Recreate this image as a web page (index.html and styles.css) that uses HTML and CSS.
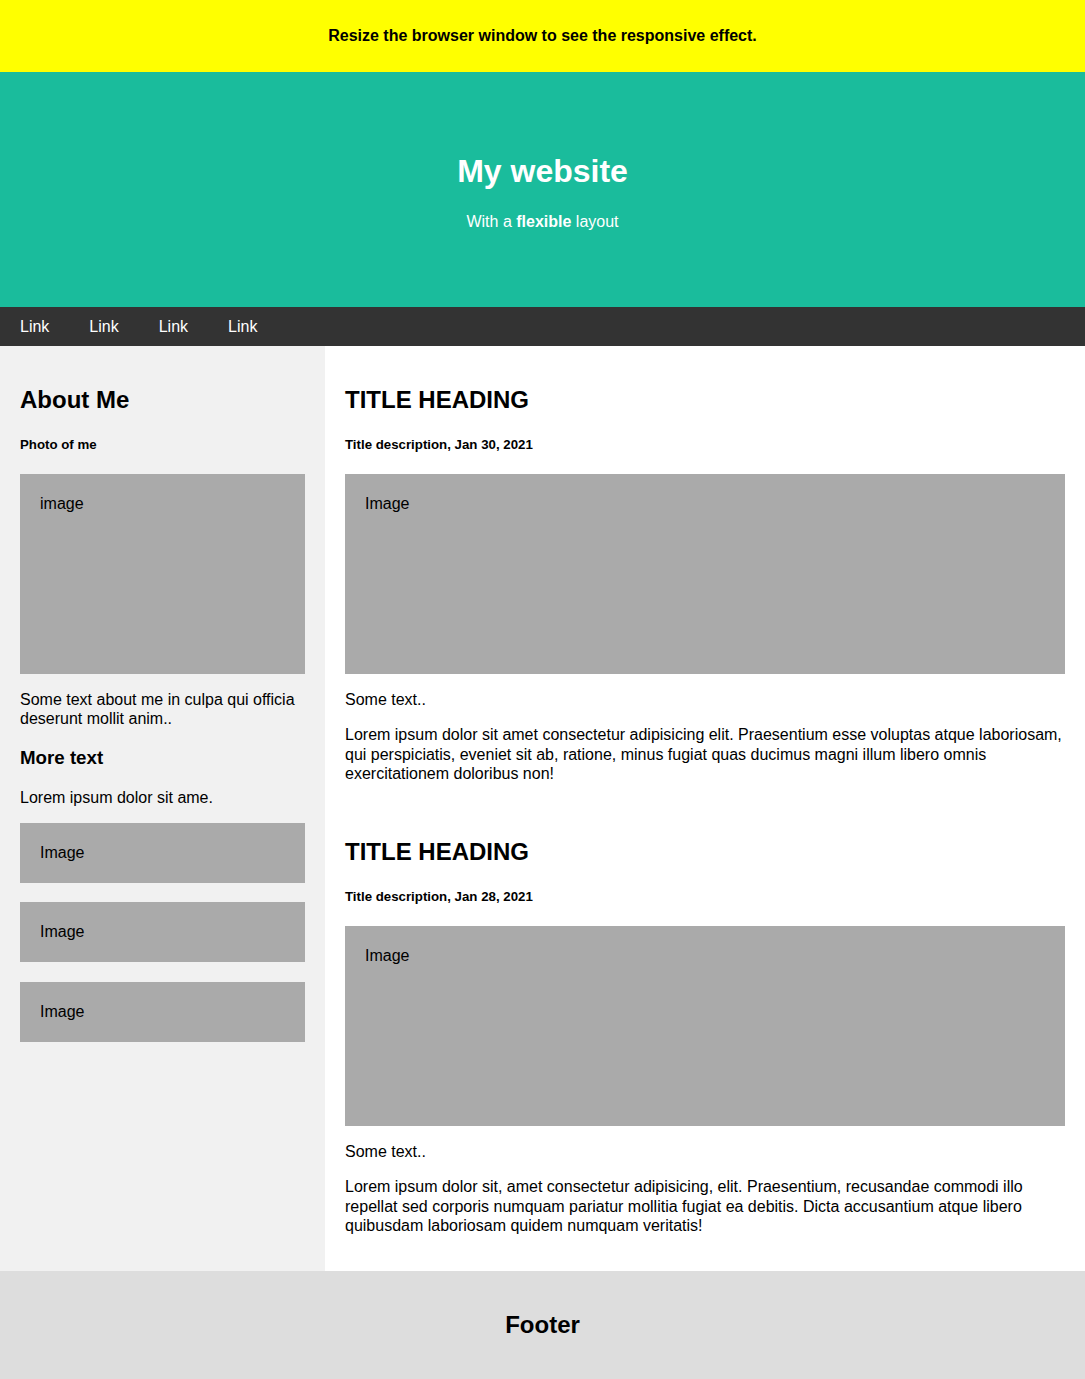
FILE: index.html
```html
<!DOCTYPE html>
<html lang="en">
<head>
<meta charset="utf-8">
<title>My website</title>
<link rel="stylesheet" href="styles.css">
</head>
<body>
<div class="notice">Resize the browser window to see the responsive effect.</div>

<div class="header">
  <h1>My website</h1>
  <p>With a <b>flexible</b> layout</p>
</div>

<div class="navbar">
  <a href="#">Link</a>
  <a href="#">Link</a>
  <a href="#">Link</a>
  <a href="#">Link</a>
</div>

<div class="row">
  <div class="side">
    <h2>About Me</h2>
    <h5>Photo of me</h5>
    <div class="fakeimg tall">image</div>
    <p>Some text about me in culpa qui officia deserunt mollit anim..</p>
    <h3>More text</h3>
    <p>Lorem ipsum dolor sit ame.</p>
    <div class="fakeimg short">Image</div><br>
    <div class="fakeimg short">Image</div><br>
    <div class="fakeimg short">Image</div>
  </div>
  <div class="main">
    <h2>TITLE HEADING</h2>
    <h5>Title description, Jan 30, 2021</h5>
    <div class="fakeimg tall">Image</div>
    <p>Some text..</p>
    <p>Lorem ipsum dolor sit amet consectetur adipisicing elit. Praesentium esse voluptas atque laboriosam, qui perspiciatis, eveniet sit ab, ratione, minus fugiat quas ducimus magni illum libero omnis exercitationem doloribus non!</p>
    <br>
    <h2>TITLE HEADING</h2>
    <h5>Title description, Jan 28, 2021</h5>
    <div class="fakeimg tall">Image</div>
    <p>Some text..</p>
    <p>Lorem ipsum dolor sit, amet consectetur adipisicing, elit. Praesentium, recusandae commodi illo repellat sed corporis numquam pariatur mollitia fugiat ea debitis. Dicta accusantium atque libero quibusdam laboriosam quidem numquam veritatis!</p>
  </div>
</div>

<div class="footer">
  <h2>Footer</h2>
</div>
</body>
</html>
```

FILE: styles.css
```css
* {
  box-sizing: border-box;
}

body {
  margin: 0;
  font-family: "Liberation Sans", Arial, sans-serif;
  color: #000;
  line-height: 1.2;
}

h1 {
  line-height: 37px;
}

h2 {
  line-height: 1.2;
}

h3 {
  line-height: 22px;
}

h5 {
  line-height: 15px;
}

.notice {
  background: #ffff00;
  text-align: center;
  font-weight: bold;
  line-height: 18px;
  padding: 27px 20px 27px;
}

.header {
  padding: 60px;
  text-align: center;
  background: #1abc9c;
  color: #fff;
}

.navbar {
  display: flex;
  background-color: #333;
}

.navbar a {
  color: #fff;
  padding: 10px 20px;
  text-decoration: none;
  text-align: center;
}

.row {
  display: flex;
}

.side {
  flex: 0 0 325px;
  background-color: #f1f1f1;
  padding: 20px;
}

.main {
  flex: 1 1 auto;
  background-color: #fff;
  padding: 20px;
}

.fakeimg {
  background-color: #aaa;
  width: 100%;
  padding: 20px;
}

.fakeimg.tall {
  height: 200px;
}

.fakeimg.short {
  height: 60px;
}

.footer {
  padding: 20px;
  text-align: center;
  background: #ddd;
}
```
